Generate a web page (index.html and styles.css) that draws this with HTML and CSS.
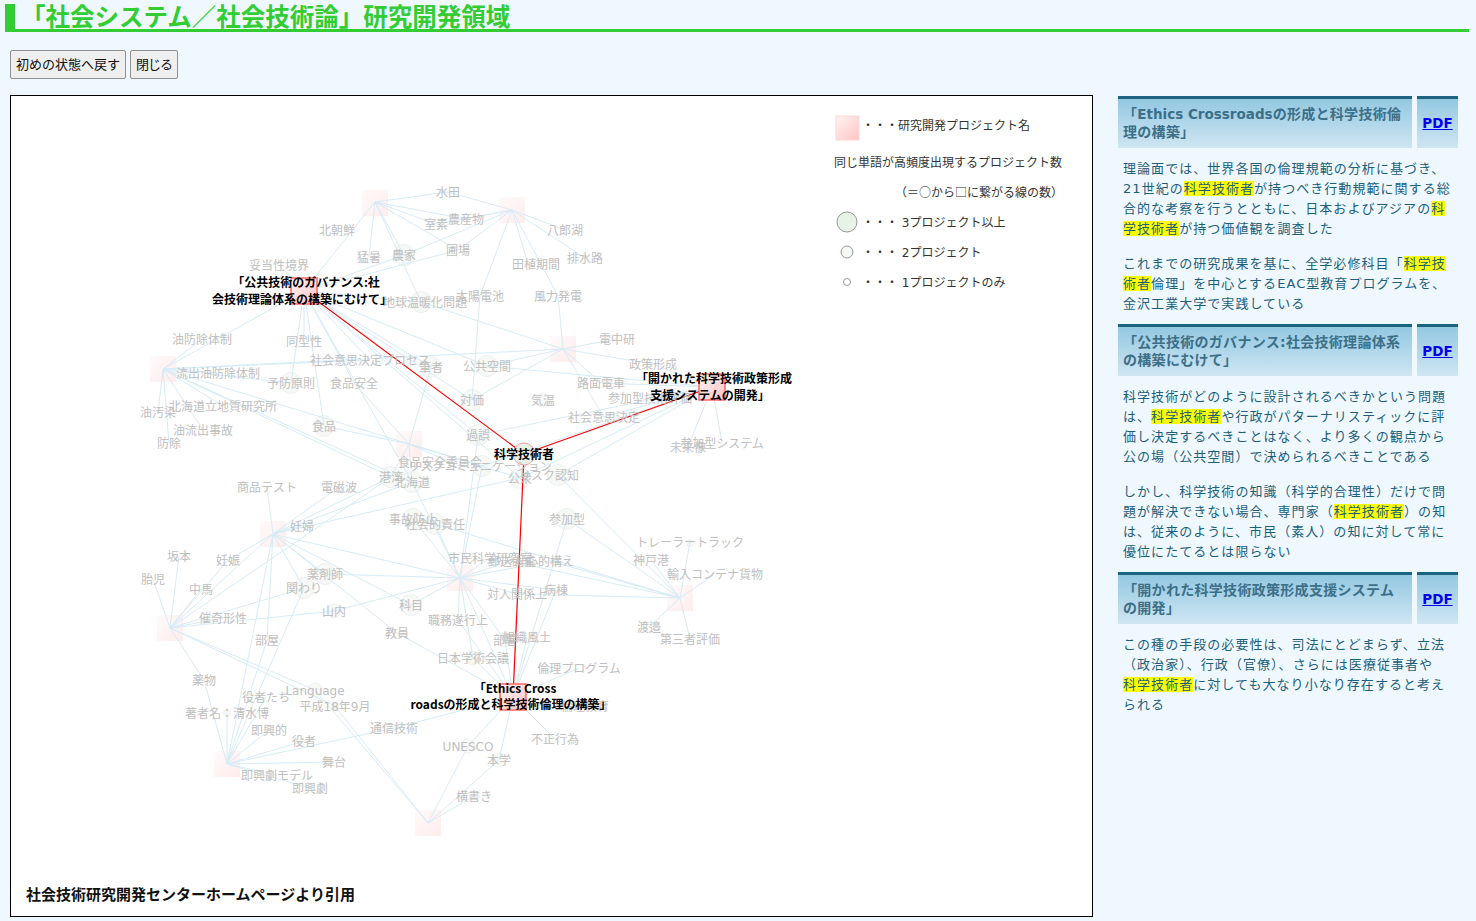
FILE: index.html
```html
<!DOCTYPE html>
<html lang="ja">
<head>
<meta charset="utf-8">
<title>「社会システム／社会技術論」研究開発領域</title>
<link rel="stylesheet" href="styles.css">
</head>
<body>
<h1 class="title">「社会システム／社会技術論」研究開発領域</h1>
<div class="toolbar">
  <button class="btn" type="button">初めの状態へ戻す</button>
  <button class="btn btn-close" type="button">閉じる</button>
</div>
<main class="content">
  <section class="figure">
    <svg class="map" viewBox="11 96 1081 820" width="1081" height="820" xmlns="http://www.w3.org/2000/svg">
      <defs>
        <linearGradient id="faint" x1="0" y1="0" x2="1" y2="1"><stop offset="0" stop-color="#fffafa"/><stop offset="1" stop-color="#ffecec"/></linearGradient>
        <linearGradient id="strong" x1="0" y1="0" x2="1" y2="1"><stop offset="0" stop-color="#fff4f4"/><stop offset="1" stop-color="#ffc4c4"/></linearGradient>
      </defs>
      <g class="sq">
        <rect x="362" y="190" width="26" height="26"/><rect x="499" y="197" width="26" height="26"/><rect x="550" y="336" width="26" height="26"/>
        <rect x="150" y="356" width="26" height="26"/><rect x="396" y="431" width="26" height="26"/><rect x="260" y="521" width="26" height="26"/>
        <rect x="157" y="615" width="26" height="26"/><rect x="214" y="751" width="26" height="26"/><rect x="415" y="810" width="26" height="26"/>
        <rect x="447" y="565" width="26" height="26"/><rect x="667" y="585" width="26" height="26"/>
      </g>
      <g class="dots">
        <circle class="c3" cx="404" cy="255"/><circle class="c3" cx="421" cy="302"/><circle class="c3" cx="291" cy="383"/><circle class="c3" cx="324" cy="426"/><circle class="c3" cx="431" cy="367"/><circle class="c3" cx="487" cy="366"/><circle class="c3" cx="472" cy="400"/><circle class="c3" cx="478" cy="435"/><circle class="c3" cx="391" cy="477"/><circle class="c3" cx="412" cy="482"/><circle class="c3" cx="482" cy="466"/><circle class="c3" cx="520" cy="478"/><circle class="c3" cx="558" cy="475"/><circle class="c3" cx="413" cy="519"/><circle class="c3" cx="435" cy="524"/><circle class="c3" cx="567" cy="519"/><circle class="c3" cx="325" cy="574"/><circle class="c3" cx="304" cy="588"/><circle class="c3" cx="411" cy="605"/>
        <circle class="c2" cx="543" cy="400"/><circle class="c2" cx="315" cy="690"/><circle class="c2" cx="334" cy="611"/><circle class="c2" cx="468" cy="746"/><circle class="c2" cx="499" cy="760"/><circle class="c2" cx="473" cy="658"/><circle class="c2" cx="505" cy="640"/>
        <circle class="c1" cx="227" cy="713"/><circle class="c1" cx="379" cy="361"/><circle class="c1" cx="690" cy="543"/><circle class="c1" cx="394" cy="728"/><circle class="c1" cx="335" cy="706"/>
      </g>
      <path class="edges" d="M375 202L448 192M375 202L466 219M375 202L436 224M375 202L304 291M375 202L369 257M375 202L404 255M375 202L458 250M375 202L421 302M512 210L448 192M512 210L466 219M512 210L436 224M512 210L565 230M512 210L585 258M512 210L528 264M512 210L558 296M512 210L480 296M512 210L404 255M512 210L458 250M304 291L404 255M304 291L458 250M480 296L472 400M558 296L563 349M563 349L617 339M563 349L653 364M563 349L601 383M563 349L604 417M563 349L487 366M563 349L421 302M563 349L472 400M563 349L163 369M304 291L279 265M304 291L421 302M304 291L304 341M304 291L291 383M304 291L324 426M304 291L354 383M304 291L431 367M304 291L487 366M304 291L472 400M304 291L478 435M304 291L163 369M304 291L370 360M304 291L412 482M304 291L520 478M163 369L202 339M163 369L218 373M163 369L370 360M163 369L291 383M163 369L158 412M163 369L169 443M163 369L223 406M163 369L203 430M163 369L391 477M163 369L412 482M163 369L482 466M409 444L324 426M409 444L450 462M409 444L391 477M409 444L412 482M409 444L354 383M409 444L482 466M409 444L520 478M409 444L431 367M712 387L653 364M712 387L601 383M712 387L650 398M712 387L604 417M712 387L487 366M712 387L688 447M712 387L722 443M712 387L558 475M712 387L520 478M712 387L482 466M712 387L478 435M273 534L267 487M273 534L339 487M273 534L302 526M273 534L228 560M273 534L391 477M273 534L412 482M273 534L304 588M273 534L325 574M273 534L411 605M273 534L397 633M273 534L267 640M273 534L460 578M273 534L520 478M273 534L227 764M170 628L179 556M170 628L153 579M170 628L201 589M170 628L228 560M170 628L273 534M170 628L223 618M170 628L304 588M170 628L334 611M170 628L204 680M170 628L315 690M170 628L335 706M170 628L391 477M227 764L204 680M227 764L227 713M227 764L266 697M227 764L269 730M227 764L304 741M227 764L394 728M227 764L334 762M227 764L277 775M227 764L310 788M227 764L304 588M227 764L267 640M428 823L315 690M428 823L335 706M428 823L468 746M428 823L499 760M428 823L474 796M460 578L412 482M460 578L413 519M460 578L435 524M460 578L490 558M460 578L510 561M460 578L550 561M460 578L517 594M460 578L556 590M460 578L325 574M460 578L334 611M460 578L411 605M460 578L458 620M460 578L505 640M460 578L473 658M460 578L478 435M460 578L482 466M680 598L690 542M680 598L651 560M680 598L715 574M680 598L649 627M680 598L690 639M680 598L567 519M680 598L550 561M680 598L517 594M680 598L510 561M680 598L558 475M680 598L435 524M513 697L473 658M513 697L458 620M513 697L505 640M513 697L527 637M513 697L579 668M513 697L556 590M513 697L555 739M513 697L499 760M513 697L468 746M513 697L394 728M513 697L567 519M513 697L517 594M513 697L460 578M513 697L397 633"/>
      <path class="hot" d="M304 291L524 454M712 387L524 454M513 697L524 454"/>
      <circle class="c4" cx="524" cy="454"/>
      <g class="hotsq">
        <rect x="291" y="278" width="26" height="26"/><rect x="699" y="374" width="26" height="26"/><rect x="500" y="684" width="26" height="26"/>
      </g>
      <g class="w">
        <text x="448" y="196">水田</text><text x="466" y="223">農産物</text><text x="436" y="228">室素</text><text x="337" y="234">北朝鮮</text><text x="565" y="234">八郎湖</text><text x="369" y="261">猛暑</text><text x="404" y="259">農家</text><text x="458" y="254">圃場</text><text x="536" y="268">田植期間</text><text x="585" y="262">排水路</text><text x="279" y="269">妥当性境界</text><text x="425" y="306">地球温暖化問題</text><text x="480" y="300">太陽電池</text><text x="558" y="300">風力発電</text><text x="617" y="343">電中研</text><text x="202" y="343">油防除体制</text><text x="304" y="345">同型性</text><text x="370" y="364">社会意思決定プロセス</text><text x="431" y="371">筆者</text><text x="487" y="370">公共空間</text><text x="653" y="368">政策形成</text><text x="218" y="377">流出油防除体制</text><text x="291" y="387">予防原則</text><text x="354" y="387">食品安全</text><text x="601" y="387">路面電車</text><text x="650" y="402">参加型技術評価</text><text x="158" y="416">油汚染</text><text x="223" y="410">北海道立地質研究所</text><text x="472" y="404">対価</text><text x="543" y="404">気温</text><text x="604" y="421">社会意思決定</text><text x="203" y="434">油流出事故</text><text x="169" y="447">防除</text><text x="324" y="430">食品</text><text x="478" y="439">過誤</text><text x="688" y="451">未来像</text><text x="722" y="447">参加型システム</text><text x="440" y="466">食品安全委員会</text><text x="391" y="481">港湾</text><text x="412" y="486">北海道</text><text x="480" y="470">リスクコミュニケーション</text><text x="520" y="482">公衆</text><text x="549" y="479">リスク認知</text><text x="267" y="491">商品テスト</text><text x="339" y="491">電磁波</text><text x="413" y="523">事故防止</text><text x="435" y="528">社会的責任</text><text x="567" y="523">参加型</text><text x="302" y="530">妊婦</text><text x="690" y="546">トレーラートラック</text><text x="651" y="564">神戸港</text><text x="179" y="560">坂本</text><text x="228" y="564">妊娠</text><text x="490" y="562">市民科学研究室</text><text x="512" y="565">郵送調査</text><text x="550" y="565">心的構え</text><text x="715" y="578">輸入コンテナ貨物</text><text x="153" y="583">胎児</text><text x="325" y="578">薬剤師</text><text x="201" y="593">中馬</text><text x="304" y="592">関わり</text><text x="556" y="594">病棟</text><text x="517" y="598">対人関係上</text><text x="411" y="609">科目</text><text x="334" y="615">山内</text><text x="458" y="624">職務遂行上</text><text x="223" y="622">催奇形性</text><text x="690" y="643">第三者評価</text><text x="649" y="631">渡邉</text><text x="267" y="644">部屋</text><text x="397" y="637">教員</text><text x="505" y="644">部署</text><text x="527" y="641">組織風土</text><text x="473" y="662">日本学術会議</text><text x="579" y="672">倫理プログラム</text><text x="204" y="684">薬物</text><text x="315" y="694">Language</text><text x="266" y="701">役者たち</text><text x="335" y="710">平成18年9月</text><text x="227" y="717">著者名：清水博</text><text x="269" y="734">即興的</text><text x="394" y="732">通信技術</text><text x="304" y="745">役者</text><text x="468" y="750">UNESCO</text><text x="555" y="743">不正行為</text><text x="499" y="764">本学</text><text x="334" y="766">舞台</text><text x="277" y="779">即興劇モデル</text><text x="310" y="792">即興劇</text><text x="474" y="800">横書き</text><text x="585" y="710">倫理教育</text>
      </g>
      <g class="lbl">
        <text x="306" y="287">「公共技術のガバナンス:社</text><text x="302" y="304">会技術理論体系の構築にむけて」</text>
        <text x="714" y="383">「開かれた科学技術政策形成</text><text x="710" y="400">支援システムの開発」</text>
        <text x="524" y="459">科学技術者</text>
        <text x="515" y="693">「Ethics Cross</text><text x="511" y="709">roadsの形成と科学技術倫理の構築」</text>
      </g>
      <g class="legend">
        <rect class="lsq" x="836" y="116" width="23" height="24"/>
        <text x="862" y="130">・・・研究開発プロジェクト名</text>
        <text x="834" y="167">同じ単語が高頻度出現するプロジェクト数</text>
        <text class="legend-note" x="895" y="197">（＝○から□に繋がる線の数）</text>
        <circle class="l3" cx="847" cy="222"/><text x="862" y="227">・・・ 3プロジェクト以上</text>
        <circle class="l2" cx="847" cy="252"/><text x="862" y="257">・・・ 2プロジェクト</text>
        <circle class="l1" cx="847" cy="282"/><text x="862" y="287">・・・ 1プロジェクトのみ</text>
      </g>
      <text class="credit" x="26" y="900">社会技術研究開発センターホームページより引用</text>
    </svg>
  </section>
  <aside class="side">
    <div class="head"><h2 class="head-title">「<span class="latin">Ethics Crossroads</span>の形成と科学技術倫<br>理の構築」</h2><div class="head-pdf"><a href="#">PDF</a></div></div>
    <p class="para">理論面では、世界各国の倫理規範の分析に基づき、<br>21世紀の<mark>科学技術者</mark>が持つべき行動規範に関する総<br>合的な考察を行うとともに、日本およびアジアの<mark>科<br>学技術者</mark>が持つ価値観を調査した</p>
    <p class="para">これまでの研究成果を基に、全学必修科目「<mark>科学技<br>術者</mark>倫理」を中心とするEAC型教育プログラムを、<br>金沢工業大学で実践している</p>
    <div class="head"><h2 class="head-title">「公共技術のガバナンス:社会技術理論体系<br>の構築にむけて」</h2><div class="head-pdf"><a href="#">PDF</a></div></div>
    <p class="para">科学技術がどのように設計されるべきかという問題<br>は、<mark>科学技術者</mark>や行政がパターナリスティックに評<br>価し決定するべきことはなく、より多くの観点から<br>公の場（公共空間）で決められるべきことである</p>
    <p class="para">しかし、科学技術の知識（科学的合理性）だけで問<br>題が解決できない場合、専門家（<mark>科学技術者</mark>）の知<br>は、従来のように、市民（素人）の知に対して常に<br>優位にたてるとは限らない</p>
    <div class="head"><h2 class="head-title">「開かれた科学技術政策形成支援システム<br>の開発」</h2><div class="head-pdf"><a href="#">PDF</a></div></div>
    <p class="para">この種の手段の必要性は、司法にとどまらず、立法<br>（政治家）、行政（官僚）、さらには医療従事者や<br><mark>科学技術者</mark>に対しても大なり小なり存在すると考え<br>られる</p>
  </aside>
</main>
</body>
</html>
```
FILE: styles.css
```css
* { box-sizing: border-box; }
html, body { margin: 0; padding: 0; }
body {
  background: #f0f8ff;
  font-family: "DejaVu Sans", "Noto Sans CJK JP", sans-serif;
  height: 921px;
  overflow: hidden;
}
.title {
  margin: 4px 7px 0 5px;
  height: 28px;
  padding-left: 6px;
  border-left: 10px solid #32cd32;
  border-bottom: 3px solid #32cd32;
  color: #32cd32;
  font-family: "Noto Sans CJK JP", sans-serif;
  font-size: 24.5px;
  line-height: 24px;
  font-weight: 700;
  white-space: nowrap;
}
.toolbar {
  display: flex;
  gap: 4px;
  margin: 18px 0 0 10px;
  height: 29px;
}
.btn {
  height: 29px;
  padding: 0 5px 2px;
  background: #efefef;
  border: 1px solid #8f8f8f;
  border-radius: 2px;
  color: #111;
  font-family: "Noto Sans CJK JP", sans-serif;
  font-size: 13px;
}
.btn-close { letter-spacing: -1px; }
.content {
  display: flex;
  margin: 16px 0 0 10px;
  align-items: flex-start;
}
.figure {
  width: 1083px;
  height: 822px;
  background: #fff;
  border: 1px solid #000;
  flex: none;
}
.map { display: block; }
.sq rect { fill: url(#faint); }
.edges { fill: none; stroke: #d6ecf7; stroke-width: 1; }
.hot { fill: none; stroke: #f00; stroke-width: 1.2; }
.hotsq rect { fill: url(#strong); stroke: #f66; stroke-width: 1.5; }
.dots circle { fill: #f6f9f6; stroke: #eef2ee; }
.c1 { r: 3.5px; }
.c2 { r: 7px; }
.c3 { r: 10.5px; }
.c4 { r: 11px; fill: #e8f3e8; stroke: #f3a0a0; }
.w { transform: translateY(1px); }
.w text {
  fill: #c0c0c0;
  font-size: 12px;
  text-anchor: middle;
}
.lbl text {
  fill: #000;
  font-family: "Noto Sans CJK JP", sans-serif;
  font-size: 12px;
  font-weight: 700;
  text-anchor: middle;
}
.legend text { fill: #333; font-size: 12px; }
.legend .legend-note { font-family: "Noto Sans CJK JP", sans-serif; }
.lsq { fill: url(#strong); stroke: #ffd6d6; stroke-width: 1; }
.legend circle { stroke: #999; stroke-width: 1; }
.l3 { r: 10px; fill: #e8f3e8; }
.l2 { r: 6px; fill: #f4f9f4; }
.l1 { r: 3.5px; fill: #fff; }
.credit { fill: #111; font-size: 15px; font-weight: 700; }
.side {
  width: 340px;
  margin-left: 25px;
  padding-top: 1px;
  flex: none;
}
.head {
  display: flex;
  gap: 5px;
  height: 52px;
  margin-bottom: 11px;
}
.head-title, .head-pdf {
  border-top: 3px solid #1b6582;
  background: linear-gradient(#93c8e2, #cfe6f2);
}
.head-title {
  flex: 1;
  margin: 0;
  padding: 6px 0 0 5px;
  color: #3c6f88;
  font-size: 14px;
  line-height: 18px;
  font-weight: 700;
  white-space: nowrap;
  letter-spacing: .3px;
}
.latin { font-size: 13.5px; letter-spacing: 0; }
.head-pdf {
  width: 41px;
  padding-top: 15px;
  text-align: center;
  font-size: 13.5px;
  line-height: 18px;
  font-weight: 700;
}
.head-pdf a { color: #00e; }
.para {
  margin: 0 0 15px;
  padding-left: 5px;
  color: #1b5f7c;
  font-size: 13px;
  line-height: 20px;
  letter-spacing: 1.05px;
  white-space: nowrap;
}
.para:has(+ .head) { margin-bottom: 10px; }
mark { background: #ff0; color: inherit; }
```
